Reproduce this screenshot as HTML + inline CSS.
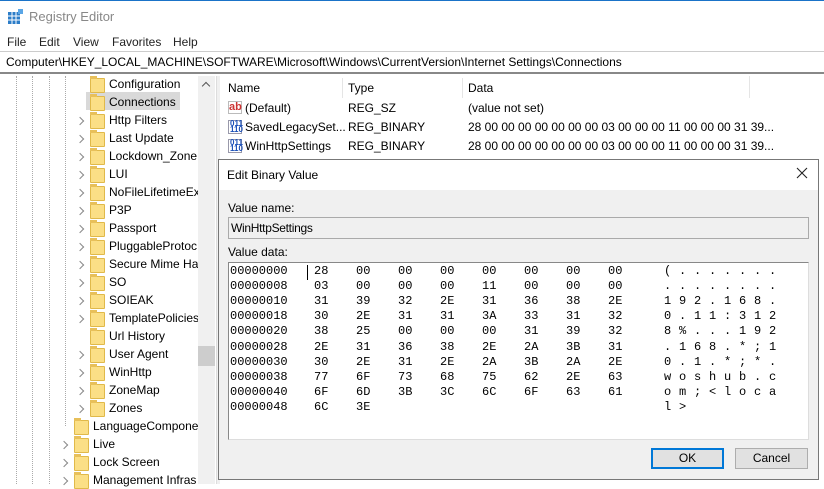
<!DOCTYPE html>
<html><head><style>
*{margin:0;padding:0;box-sizing:border-box}
body{width:824px;height:484px;overflow:hidden;background:#fff;font-family:"Liberation Sans",sans-serif;font-size:12px;color:#000;position:relative}
.a{position:absolute;white-space:nowrap}
.fold{position:absolute;width:15px;height:15px;background:#fbdf86;border:1px solid #e0b94a;border-radius:1px}
.fold:before{content:"";position:absolute;left:-1px;top:-3px;width:7px;height:3px;background:#e8c05a}
.chev{position:absolute;width:6px;height:6px;border-right:1.5px solid #888;border-top:1.5px solid #888;transform:rotate(45deg)}
.mono{font-family:"Liberation Mono",monospace;font-size:12px}
.vd{position:absolute;width:0;border-left:1px dotted #aaa}
</style></head><body>
<div class="a" style="left:0;top:0;width:824px;height:1px;background:#1a73c8"></div>
<svg class="a" style="left:8px;top:9px" width="16" height="16"><rect x="0" y="3" width="12" height="12" fill="#2c7dc8"/><g stroke="#fff" stroke-width="1"><line x1="4" y1="3" x2="4" y2="15"/><line x1="8" y1="3" x2="8" y2="15"/><line x1="0" y1="7" x2="12" y2="7"/><line x1="0" y1="11" x2="12" y2="11"/></g><rect x="10" y="0" width="5" height="5" fill="#5aa6e6"/></svg>
<div class="a" style="left:29px;top:9px;font-size:13px;color:#888">Registry Editor</div>
<div class="a" style="left:7px;top:35px;color:#222">File</div>
<div class="a" style="left:39px;top:35px;color:#222">Edit</div>
<div class="a" style="left:73px;top:35px;color:#222">View</div>
<div class="a" style="left:112px;top:35px;color:#222">Favorites</div>
<div class="a" style="left:173px;top:35px;color:#222">Help</div>
<div class="a" style="left:0;top:51px;width:824px;height:23px;border-top:1px solid #ccc;border-bottom:2px solid #888"></div>
<div class="a" style="left:6px;top:55px">Computer\HKEY_LOCAL_MACHINE\SOFTWARE\Microsoft\Windows\CurrentVersion\Internet Settings\Connections</div>
<div class="vd" style="left:16px;top:76px;height:408px"></div>
<div class="vd" style="left:32px;top:76px;height:408px"></div>
<div class="vd" style="left:49px;top:76px;height:408px"></div>
<div class="vd" style="left:65px;top:76px;height:350px"></div>
<div class="a" style="left:86px;top:92px;width:94px;height:18px;background:#d9d9d9"></div>
<div class="a" style="left:198px;top:76px;width:17px;height:408px;background:#f0f0f0"></div>
<div class="a" style="left:198px;top:346px;width:17px;height:20px;background:#cdcdcd"></div>
<div class="chev" style="left:203px;top:83px;transform:rotate(-45deg);border-color:#555"></div>
<div class="a" style="left:216px;top:76px;width:4px;height:408px;background:#f0f0f0;border-left:1px solid #ddd"></div>
<div id="tree"></div>
<div class="a" style="left:228px;top:81px">Name</div>
<div class="a" style="left:342px;top:78px;width:1px;height:20px;background:#e5e5e5"></div>
<div class="a" style="left:348px;top:81px">Type</div>
<div class="a" style="left:462px;top:78px;width:1px;height:20px;background:#e5e5e5"></div>
<div class="a" style="left:468px;top:81px">Data</div>
<div class="a" style="left:749px;top:76px;width:1px;height:22px;background:#e5e5e5"></div>
<div class="a" style="left:228px;top:101px;font-weight:bold;color:#c33;font-size:11px;border:1px solid #bbb;height:13px;width:14px;line-height:11px;text-align:center">ab</div>
<div class="a" style="left:245px;top:101px">(Default)</div><div class="a" style="left:348px;top:101px">REG_SZ</div><div class="a" style="left:468px;top:101px">(value not set)</div>
<div class="a" style="left:228px;top:120px;font-size:8px;line-height:6px;color:#1a4fb8;font-weight:bold;border:1px solid #99a;width:14px;height:14px;padding-left:1px">011<br>110</div>
<div class="a" style="left:245px;top:120px">SavedLegacySet...</div><div class="a" style="left:348px;top:120px">REG_BINARY</div><div class="a" style="left:468px;top:120px">28 00 00 00 00 00 00 00 03 00 00 00 11 00 00 00 31 39...</div>
<div class="a" style="left:228px;top:139px;font-size:8px;line-height:6px;color:#1a4fb8;font-weight:bold;border:1px solid #99a;width:14px;height:14px;padding-left:1px">011<br>110</div>
<div class="a" style="left:245px;top:139px">WinHttpSettings</div><div class="a" style="left:348px;top:139px">REG_BINARY</div><div class="a" style="left:468px;top:139px">28 00 00 00 00 00 00 00 03 00 00 00 11 00 00 00 31 39...</div>
<div class="a" style="left:218px;top:159px;width:601px;height:321px;background:#f0f0f0;border:1px solid #777"></div>
<div class="a" style="left:219px;top:160px;width:599px;height:30px;background:#fff"></div>
<div class="a" style="left:227px;top:168px">Edit Binary Value</div>
<svg class="a" style="left:796px;top:167px" width="12" height="12"><path d="M1 1L11 11M11 1L1 11" stroke="#222" stroke-width="1.1"/></svg>
<div class="a" style="left:228px;top:201px">Value name:</div>
<div class="a" style="left:228px;top:217px;width:581px;height:22px;border:1px solid #aaa;background:#f0f0f0"></div>
<div class="a" style="left:231px;top:221px;letter-spacing:-0.3px">WinHttpSettings</div>
<div class="a" style="left:228px;top:245px">Value data:</div>
<div class="a" style="left:228px;top:262px;width:581px;height:178px;border:1px solid #888;border-right-color:#ddd;border-bottom-color:#ddd;background:#fff"></div>
<div class="a" style="left:307px;top:265px;width:1px;height:15px;background:#000"></div>
<div id="hex"></div>
<div class="a" style="left:651px;top:448px;width:73px;height:21px;border:2px solid #0078d7;background:#e1e1e1;text-align:center;line-height:17px">OK</div>
<div class="a" style="left:735px;top:448px;width:73px;height:21px;border:1px solid #adadad;background:#e1e1e1;text-align:center;line-height:19px">Cancel</div>
<script>
var t=[["Configuration",1,0],["Connections",1,0],["Http Filters",1,1],["Last Update",1,1],["Lockdown_Zone",1,1],["LUI",1,1],["NoFileLifetimeEx",1,1],["P3P",1,1],["Passport",1,1],["PluggableProtoc",1,1],["Secure Mime Ha",1,1],["SO",1,1],["SOIEAK",1,1],["TemplatePolicies",1,1],["Url History",1,0],["User Agent",1,1],["WinHttp",1,1],["ZoneMap",1,1],["Zones",1,1],["LanguageCompone",0,0],["Live",0,1],["Lock Screen",0,1],["Management Infras",0,1]];
var h="";t.forEach(function(r,i){var y=76+i*18;var fx=r[1]?90:74,tx=r[1]?109:93;
if(r[2])h+='<div class="chev" style="left:'+(fx-13)+'px;top:'+(y+6)+'px"></div>';
h+='<div class="fold" style="left:'+fx+'px;top:'+(y+2)+'px"></div><div class="a" style="left:'+tx+'px;top:'+(y+1)+'px;width:'+(198-tx)+'px;overflow:hidden">'+r[0]+'</div>';});
document.getElementById("tree").innerHTML=h;
var rows=[["00000000","28 00 00 00 00 00 00 00","( . . . . . . ."],["00000008","03 00 00 00 11 00 00 00",". . . . . . . ."],["00000010","31 39 32 2E 31 36 38 2E","1 9 2 . 1 6 8 ."],["00000018","30 2E 31 31 3A 33 31 32","0 . 1 1 : 3 1 2"],["00000020","38 25 00 00 00 31 39 32","8 % . . . 1 9 2"],["00000028","2E 31 36 38 2E 2A 3B 31",". 1 6 8 . * ; 1"],["00000030","30 2E 31 2E 2A 3B 2A 2E","0 . 1 . * ; * ."],["00000038","77 6F 73 68 75 62 2E 63","w o s h u b . c"],["00000040","6F 6D 3B 3C 6C 6F 63 61","o m ; < l o c a"],["00000048","6C 3E","l >"]];
h="";rows.forEach(function(r,i){var y=264+i*15.1;h+='<div class="a mono" style="left:230px;top:'+y+'px">'+r[0]+'</div>';
r[1].split(" ").forEach(function(b,j){h+='<div class="a mono" style="left:'+(314+j*42)+'px;top:'+y+'px">'+b+'</div>';});
h+='<div class="a mono" style="left:664px;top:'+y+'px;letter-spacing:0.3px">'+r[2]+'</div>';});
document.getElementById("hex").innerHTML=h;
</script>
</body></html>
